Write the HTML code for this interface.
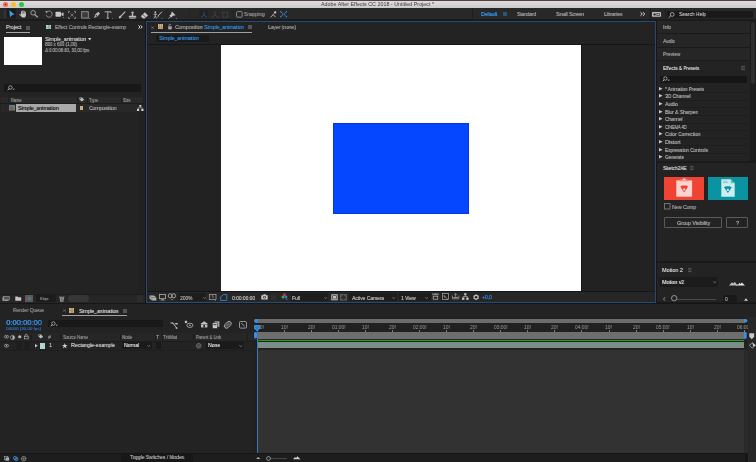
<!DOCTYPE html>
<html><head><meta charset="utf-8">
<style>
*{margin:0;padding:0;box-sizing:border-box}
html,body{width:756px;height:462px;overflow:hidden;background:#161616;font-family:"Liberation Sans",sans-serif;position:relative}
.a{position:absolute}
.t{position:absolute;white-space:nowrap;will-change:transform;transform-origin:0 0}
svg{position:absolute;overflow:visible}
</style></head><body>
<div class="a" style="left:0px;top:0px;width:756px;height:1px;background:#54403f;"></div>
<div class="a" style="left:0px;top:1px;width:756px;height:7px;background:linear-gradient(#dedede,#cbcbcb);"></div>
<div class="a" style="left:3.2px;top:1.9px;width:5.2px;height:5.2px;background:#fc5f57;border-radius:50%"></div>
<div class="a" style="left:11.2px;top:1.9px;width:5.2px;height:5.2px;background:#fdbb2e;border-radius:50%"></div>
<div class="a" style="left:19.2px;top:1.9px;width:5.2px;height:5.2px;background:#29c840;border-radius:50%"></div>
<div class="a" style="left:5.2px;top:3.9px;width:1.2px;height:1.2px;background:#5a1a18;border-radius:50%"></div>
<div class="t" style="left:321px;top:2.00px;font-size:5.3px;line-height:5.3px;color:#383838;font-weight:400;transform:scaleX(1.011);text-shadow:0.2px 0 0 #383838;text-shadow:none">Adobe After Effects CC 2018 - Untitled Project *</div>
<div class="a" style="left:0px;top:8px;width:756px;height:11px;background:#282828;"></div>
<div class="a" style="left:0px;top:19px;width:756px;height:2px;background:#1b1b1b;"></div>
<div class="a" style="left:3.5px;top:10px;width:0.7px;height:8px;background:#333;"></div>
<div class="a" style="left:5px;top:10px;width:0.7px;height:8px;background:#333;"></div>
<div class="a" style="left:7px;top:9.3px;width:8.8px;height:8.5px;background:#1b1b1b;"></div>
<svg style="left:8.6px;top:9.8px" width="6" height="7.4" viewBox="0 0 6 7.4"><path d="M0.3 0.2 L5.6 4.6 L3.2 4.9 L1 7.2 Z" fill="#3d9bf0"/></svg>
<svg style="left:18.5px;top:9.8px" width="7.5" height="7.6" viewBox="0 0 7.5 7.6"><g stroke="#c8c8c8" stroke-linecap="round" fill="none"><path d="M2.6 4.2 V1.6" stroke-width="1"/><path d="M3.9 3.8 V0.8" stroke-width="1"/><path d="M5.2 3.9 V1.2" stroke-width="1"/><path d="M6.4 4.4 V2.2" stroke-width="0.9"/><path d="M0.7 4.3 L2.2 5.8" stroke-width="1"/></g><path d="M2.1 3.8 H6.9 V5.2 C6.9 6.6 5.8 7.5 4.5 7.5 H3.8 C2.8 7.5 2.1 6.6 1.6 5.6 Z" fill="#c8c8c8"/></svg>
<svg style="left:29.5px;top:9.8px" width="8" height="8" viewBox="0 0 8 8"><circle cx="3.1" cy="2.8" r="2.3" stroke="#b4b4b4" stroke-width="0.8" fill="none"/><path d="M4.8 4.6 L7.4 7" stroke="#b4b4b4" stroke-width="1.1" stroke-linecap="round"/></svg>
<div class="a" style="left:40.5px;top:10px;width:0.6px;height:8px;background:#222;"></div>
<svg style="left:44.5px;top:9.8px" width="8" height="8" viewBox="0 0 8 8"><path d="M1.6 2.2 A3.1 3.1 0 1 1 1.2 5.2" stroke="#a0a0a0" stroke-width="0.8" fill="none"/><path d="M0.4 0.8 L3 1.4 L1.2 3.4 Z" fill="#a0a0a0"/></svg>
<svg style="left:55px;top:11px" width="10" height="7" viewBox="0 0 10 7"><rect x="0.5" y="0.8" width="5.5" height="5" rx="0.8" fill="#c8c8c8"/><path d="M6.3 2.6 L8.5 1.3 V5.3 L6.3 4 Z" fill="#c8c8c8"/><rect x="8.2" y="6" width="0.8" height="0.8" fill="#999"/></svg>
<svg style="left:68px;top:10.5px" width="8" height="8" viewBox="0 0 8 8"><g stroke="#aaa" stroke-width="0.7" fill="none"><path d="M0.5 2V0.5H2 M6 0.5H7.5V2 M7.5 6V7.5H6 M2 7.5H0.5V6"/></g><path d="M2.5 2.5 L3.8 3.8 M5.5 2.5 L4.2 3.8 M2.5 5.5 L3.8 4.2 M5.5 5.5 L4.2 4.2" stroke="#aaa" stroke-width="0.7"/></svg>
<div class="a" style="left:78px;top:10px;width:0.6px;height:8px;background:#222;"></div>
<svg style="left:81px;top:10.5px" width="9" height="8" viewBox="0 0 9 8"><rect x="0.7" y="0.7" width="6.6" height="6.4" stroke="#8e8e8e" stroke-width="1" fill="#3a3a3a"/><rect x="8" y="7" width="0.8" height="0.8" fill="#999"/></svg>
<svg style="left:93px;top:10.5px" width="8" height="8" viewBox="0 0 8 8"><path d="M1 7 L2.2 3.6 L5.2 0.8 L7 2.6 L4.2 5.6 Z" fill="#b8b8b8"/><circle cx="3.3" cy="4.7" r="0.7" fill="#282828"/></svg>
<svg style="left:104px;top:10.5px" width="9" height="8" viewBox="0 0 9 8"><path d="M0.6 0.8 H7 V2 M3.8 0.8 V7.2 M2.6 7.2 H5" stroke="#bbb" stroke-width="0.9" fill="none"/><rect x="8" y="7" width="0.8" height="0.8" fill="#999"/></svg>
<svg style="left:118px;top:10.5px" width="8" height="8" viewBox="0 0 8 8"><path d="M7.2 0.6 L3.2 4.8" stroke="#c0c0c0" stroke-width="1.1"/><path d="M0.8 7.4 C0.8 5.8 1.6 4.8 2.6 4.6 L3.6 5.5 C3.4 6.8 2.3 7.4 0.8 7.4 Z" fill="#c0c0c0"/></svg>
<svg style="left:128px;top:10.5px" width="9" height="8" viewBox="0 0 9 8"><circle cx="4.5" cy="1.6" r="1.2" fill="#bbb"/><rect x="3.8" y="2.4" width="1.4" height="2.6" fill="#bbb"/><rect x="0.8" y="4.8" width="7.4" height="1.8" rx="0.6" fill="#bbb"/><rect x="1.5" y="6.8" width="6" height="0.8" fill="#bbb"/></svg>
<svg style="left:140px;top:10.5px" width="9" height="8" viewBox="0 0 9 8"><path d="M0.8 5.3 L4.8 1.2 L8 4.4 L4.6 7.6 H3 Z" fill="#c4c4c4"/><path d="M2.6 3.4 L5.8 6.4" stroke="#282828" stroke-width="0.7"/></svg>
<div class="a" style="left:150.5px;top:10px;width:0.6px;height:8px;background:#222;"></div>
<svg style="left:153px;top:10.5px" width="10" height="8" viewBox="0 0 10 8"><circle cx="2.3" cy="1.2" r="0.9" fill="#bbb"/><path d="M2.3 2.4 V5 L1 7.5 M2.3 5 L3.5 7.5 M0.6 3.3 H4" stroke="#bbb" stroke-width="0.8" fill="none"/><path d="M9 0.6 L4.8 5.2" stroke="#bbb" stroke-width="1"/><path d="M4 6.8 L5.2 5 L5.8 5.7 Z" fill="#bbb"/><rect x="8.6" y="7" width="0.8" height="0.8" fill="#999"/></svg>
<div class="a" style="left:165.5px;top:10px;width:0.6px;height:8px;background:#222;"></div>
<svg style="left:168px;top:10.5px" width="9" height="8" viewBox="0 0 9 8"><path d="M4 0.6 L7.6 4.2 L6.7 4.6 L5 4.8 L3.2 6.6 L1.4 4.8 L3.2 3 L3.4 1.4 Z" fill="#c4c4c4"/><path d="M0.6 7.6 L2.6 5.6" stroke="#c4c4c4" stroke-width="0.8"/><rect x="8.2" y="7" width="0.8" height="0.8" fill="#999"/></svg>
<div class="a" style="left:189px;top:10px;width:0.6px;height:8px;background:#222;"></div>
<div class="a" style="left:198.5px;top:9.5px;width:9.5px;height:8.5px;background:#222;"></div>
<svg style="left:199.5px;top:10.5px" width="8" height="7" viewBox="0 0 8 7"><path d="M4 0.8 V4 L1 6.5 M4 4 L7 6.5" stroke="#2b5580" stroke-width="0.9" fill="none"/></svg>
<svg style="left:210.5px;top:10.5px" width="8" height="7" viewBox="0 0 8 7"><path d="M4 0.8 V4 L1 6.5 M4 4 L7 6.5" stroke="#4a4a4a" stroke-width="0.7" fill="none"/><circle cx="4" cy="0.8" r="0.6" fill="#4a4a4a"/><circle cx="1" cy="6.5" r="0.6" fill="#4a4a4a"/><circle cx="7" cy="6.5" r="0.6" fill="#4a4a4a"/></svg>
<svg style="left:221px;top:10.5px" width="8" height="7.5" viewBox="0 0 8 7.5"><path d="M1.5 1.5 L6.5 1 L6.8 6 L2 6.5 Z" stroke="#474747" stroke-width="0.7" fill="none"/><circle cx="1.5" cy="1.5" r="0.6" fill="#474747"/><circle cx="6.8" cy="6" r="0.6" fill="#474747"/></svg>
<div class="a" style="left:233px;top:10px;width:0.6px;height:8px;background:#222;"></div>
<svg style="left:236px;top:11px" width="7" height="7" viewBox="0 0 7 7"><rect x="0.6" y="0.6" width="5.6" height="5.6" rx="1" stroke="#8a8a8a" stroke-width="1" fill="#262626"/></svg>
<div class="t" style="left:244px;top:12.00px;font-size:5.6px;line-height:5.6px;color:#8e8e8e;font-weight:400;transform:scaleX(0.863);text-shadow:0.2px 0 0 #8e8e8e;">Snapping</div>
<svg style="left:269.5px;top:10.5px" width="7" height="7" viewBox="0 0 7 7"><path d="M0.5 6.4 L3.2 3.6 L5.4 6" stroke="#c4c4c4" stroke-width="0.85" fill="none"/><path d="M3.2 3.6 L4.8 1.6" stroke="#c4c4c4" stroke-width="0.7"/><circle cx="5.2" cy="1.3" r="1.15" fill="#d0d0d0"/></svg>
<svg style="left:280.4px;top:10.8px" width="7.2" height="6.4" viewBox="0 0 7.2 6.4"><g stroke="#3a8fe0" stroke-width="0.8" fill="none"><path d="M0.7 0.7 L2.9 2.6 V3.8 L0.7 5.7 M6.5 0.7 L4.3 2.6 V3.8 L6.5 5.7"/></g><circle cx="0.7" cy="0.7" r="0.65" fill="#3a8fe0"/><circle cx="0.7" cy="5.7" r="0.65" fill="#3a8fe0"/><circle cx="6.5" cy="0.7" r="0.65" fill="#3a8fe0"/><circle cx="6.5" cy="5.7" r="0.65" fill="#3a8fe0"/></svg>
<div class="a" style="left:472px;top:9px;width:0.8px;height:10px;background:#1d1d1d;"></div>
<div class="t" style="left:481.2px;top:12.00px;font-size:5.4px;line-height:5.4px;color:#3594ec;font-weight:400;transform:scaleX(0.936);text-shadow:0.2px 0 0 #3594ec;text-shadow:0.35px 0 0 #3594ec">Default</div>
<svg style="left:502.5px;top:12.2px" width="4" height="4" viewBox="0 0 4 4"><path d="M0 0.5 H4 M0 1.5 H4 M0 2.5 H4 M0 3.5 H4" stroke="#2e6fb0" stroke-width="0.6"/></svg>
<div class="t" style="left:517px;top:12.00px;font-size:5.4px;line-height:5.4px;color:#a0a0a0;font-weight:400;transform:scaleX(0.868);text-shadow:0.2px 0 0 #a0a0a0;">Standard</div>
<div class="t" style="left:556px;top:12.00px;font-size:5.4px;line-height:5.4px;color:#a0a0a0;font-weight:400;transform:scaleX(0.873);text-shadow:0.2px 0 0 #a0a0a0;">Small Screen</div>
<div class="t" style="left:604px;top:12.00px;font-size:5.4px;line-height:5.4px;color:#a0a0a0;font-weight:400;transform:scaleX(0.880);text-shadow:0.2px 0 0 #a0a0a0;">Libraries</div>
<svg style="left:640px;top:12px" width="6" height="4" viewBox="0 0 6 4"><path d="M0.5 0.3 L2.3 2 L0.5 3.7 M3 0.3 L4.8 2 L3 3.7" stroke="#e0e0e0" stroke-width="0.95" fill="none"/></svg>
<div class="a" style="left:649.5px;top:9px;width:0.6px;height:10px;background:#1d1d1d;"></div>
<svg style="left:652px;top:11.8px" width="9" height="5" viewBox="0 0 9 5"><rect x="0" y="0" width="9" height="4.8" rx="0.7" fill="#bdbdbd"/><circle cx="2.6" cy="2.4" r="1.2" fill="#282828"/><rect x="4.6" y="1" width="3" height="2.8" fill="#282828"/><rect x="5.2" y="1.6" width="1.8" height="1.6" fill="#bdbdbd"/></svg>
<div class="a" style="left:664.5px;top:9px;width:0.6px;height:10px;background:#1d1d1d;"></div>
<div class="a" style="left:667px;top:10.7px;width:86px;height:7px;background:#191919;border-radius:1px"></div>
<svg style="left:668px;top:11.5px" width="7" height="6" viewBox="0 0 7 6"><circle cx="4.2" cy="2.4" r="1.9" stroke="#c0c0c0" stroke-width="0.8" fill="none"/><path d="M2.8 3.8 L0.7 5.8" stroke="#c0c0c0" stroke-width="0.9"/></svg>
<div class="t" style="left:679px;top:12.00px;font-size:5.4px;line-height:5.4px;color:#b0b0b0;font-weight:400;transform:scaleX(0.910);text-shadow:0.2px 0 0 #b0b0b0;">Search Help</div>
<div class="a" style="left:0px;top:21px;width:145px;height:281px;background:#232323;"></div>
<div class="t" style="left:6px;top:25.00px;font-size:5.6px;line-height:5.6px;color:#c4c4c4;font-weight:400;transform:scaleX(0.884);text-shadow:0.2px 0 0 #c4c4c4;">Project</div>
<div class="a" style="left:26px;top:25.5px;width:3.5px;height:4px;background:#555;"></div>
<div class="a" style="left:6px;top:31.6px;width:24px;height:1.2px;background:#a8a8a8;"></div>
<div class="a" style="left:46px;top:24.5px;width:5px;height:4.5px;background:#a6d8d0;"></div>
<div class="a" style="left:47.6px;top:24.5px;width:0.4px;height:4.5px;background:#8ab0aa;"></div>
<div class="a" style="left:49.3px;top:24.5px;width:0.4px;height:4.5px;background:#8ab0aa;"></div>
<div class="a" style="left:46px;top:26.6px;width:5px;height:0.4px;background:#8ab0aa;"></div>
<div class="t" style="left:55.3px;top:25.00px;font-size:5.6px;line-height:5.6px;color:#959595;font-weight:400;transform:scaleX(0.868);text-shadow:0.2px 0 0 #959595;">Effect Controls Rectangle-examp</div>
<svg style="left:138px;top:25px" width="5" height="4" viewBox="0 0 5 4"><path d="M0.4 0.3 L2 2 L0.4 3.7 M2.6 0.3 L4.2 2 L2.6 3.7" stroke="#e0e0e0" stroke-width="0.95" fill="none"/></svg>
<div class="a" style="left:4px;top:37px;width:38px;height:28px;background:#ffffff;"></div>
<div class="t" style="left:44.8px;top:37.00px;font-size:5.7px;line-height:5.7px;color:#c4c4c4;font-weight:400;transform:scaleX(0.911);text-shadow:0.2px 0 0 #c4c4c4;">Simple_animation</div>
<svg style="left:87.5px;top:38px" width="3.4" height="2.8" viewBox="0 0 3.4 2.8"><path d="M0 0 H3.4 L1.7 2.6 Z" fill="#d0d0d0"/></svg>
<div class="t" style="left:44.8px;top:43.00px;font-size:4.8px;line-height:4.8px;color:#a0a0a0;font-weight:400;transform:scaleX(0.916);text-shadow:0.2px 0 0 #a0a0a0;">800 x 600 (1,00)</div>
<div class="t" style="left:44.8px;top:49.00px;font-size:4.8px;line-height:4.8px;color:#a0a0a0;font-weight:400;transform:scaleX(0.891);text-shadow:0.2px 0 0 #a0a0a0;">&Delta; 0:00:06:00, 30,00 fps</div>
<div class="a" style="left:4px;top:84px;width:137px;height:8px;background:#181818;"></div>
<svg style="left:6.5px;top:84.6px" width="8" height="6" viewBox="0 0 8 6"><circle cx="3.4" cy="2.5" r="1.75" stroke="#c4c4c4" stroke-width="0.7" fill="none"/><path d="M2.2 3.7 L0.6 5.3" stroke="#c4c4c4" stroke-width="0.9"/><path d="M5.7 3.7 H7.8 L6.75 5 Z" fill="#c4c4c4"/></svg>
<div class="a" style="left:1px;top:96.5px;width:142px;height:6.8px;background:#292929;"></div>
<div class="a" style="left:8.3px;top:97px;width:0.6px;height:6px;background:#1e1e1e;"></div>
<div class="a" style="left:77.3px;top:97px;width:0.6px;height:6px;background:#1e1e1e;"></div>
<div class="a" style="left:87.1px;top:97px;width:0.6px;height:6px;background:#1e1e1e;"></div>
<div class="a" style="left:120.8px;top:97px;width:0.6px;height:6px;background:#1e1e1e;"></div>
<div class="a" style="left:143px;top:97px;width:0.6px;height:6px;background:#1e1e1e;"></div>
<div class="t" style="left:11px;top:99.00px;font-size:4.9px;line-height:4.9px;color:#8c8c8c;font-weight:400;transform:scaleX(0.805);text-shadow:0.2px 0 0 #8c8c8c;">Name</div>
<svg style="left:79px;top:97px" width="5.5" height="4.8" viewBox="0 0 5.5 4.8"><path d="M0.5 0.5 H3 L5.2 2.7 L2.7 4.6 L0.5 2.6 Z" fill="#bdbdbd"/><circle cx="1.6" cy="1.5" r="0.5" fill="#292929"/></svg>
<div class="t" style="left:88.9px;top:99.00px;font-size:4.9px;line-height:4.9px;color:#8c8c8c;font-weight:400;transform:scaleX(0.848);text-shadow:0.2px 0 0 #8c8c8c;">Type</div>
<div class="t" style="left:123.4px;top:99.00px;font-size:4.9px;line-height:4.9px;color:#8c8c8c;font-weight:400;transform:scaleX(0.799);text-shadow:0.2px 0 0 #8c8c8c;">Size</div>
<div class="a" style="left:0px;top:103.3px;width:145px;height:0.8px;background:#1c1c1c;"></div>
<div class="a" style="left:1px;top:104px;width:136px;height:8px;background:#282828;"></div>
<div class="a" style="left:137px;top:112px;width:8px;height:182px;background:#212121;"></div>
<svg style="left:9px;top:105.3px" width="6" height="5.5" viewBox="0 0 6 5.5"><rect x="0" y="0" width="6" height="5.5" fill="#7a7a7a"/><rect x="0.8" y="0.8" width="2.6" height="2.4" fill="#3a6fd0"/><rect x="2.6" y="2.2" width="2.6" height="2.6" fill="#2c9a3a"/><rect x="1.4" y="2.8" width="2" height="2" fill="#d03030"/></svg>
<div class="a" style="left:16px;top:104px;width:60px;height:8px;background:#a9a9a9;"></div>
<div class="t" style="left:17.5px;top:106.00px;font-size:5.5px;line-height:5.5px;color:#1e1e1e;font-weight:400;transform:scaleX(0.926);text-shadow:0.2px 0 0 #1e1e1e;">Simple_animation</div>
<div class="a" style="left:79.5px;top:105.5px;width:3.8px;height:4.5px;background:#c9ad7c;"></div>
<div class="t" style="left:89px;top:106.00px;font-size:5.6px;line-height:5.6px;color:#a4a4a4;font-weight:400;transform:scaleX(0.888);text-shadow:0.2px 0 0 #a4a4a4;">Composition</div>
<svg style="left:137px;top:105px" width="6.5" height="6" viewBox="0 0 6.5 6"><rect x="2.3" y="0" width="2" height="1.8" fill="#d0d0d0"/><rect x="0" y="3.8" width="2.2" height="2.2" fill="#d0d0d0"/><rect x="4.3" y="3.8" width="2.2" height="2.2" fill="#d0d0d0"/><path d="M3.3 1.8 V2.8 M1.1 3.8 V2.8 H5.4 V3.8" stroke="#d0d0d0" stroke-width="0.5" fill="none"/></svg>
<div class="a" style="left:0px;top:294px;width:145px;height:8.5px;background:#262626;"></div>
<div class="a" style="left:0px;top:293.5px;width:145px;height:0.6px;background:#1c1c1c;"></div>
<svg style="left:2px;top:296px" width="8" height="5" viewBox="0 0 8 5"><rect x="0.5" y="1.2" width="6" height="3.6" fill="#aaa"/><rect x="1.5" y="0.3" width="6" height="3.6" stroke="#aaa" stroke-width="0.5" fill="#555"/></svg>
<svg style="left:15px;top:296px" width="6.5" height="5" viewBox="0 0 6.5 5"><path d="M0.3 0.5 H2.5 L3 1.2 H6.2 V4.7 H0.3 Z" fill="#c8c8c8"/></svg>
<div class="a" style="left:25px;top:295px;width:8px;height:7px;background:#5a5a5a;"></div>
<svg style="left:26px;top:296px" width="6" height="5" viewBox="0 0 6 5"><circle cx="2.3" cy="2" r="1.5" fill="#d03030"/><circle cx="3.8" cy="2.2" r="1.5" fill="#2c9a3a" opacity="0.85"/><circle cx="3" cy="3.3" r="1.4" fill="#3a6fd0" opacity="0.85"/></svg>
<div class="a" style="left:35.5px;top:295px;width:20px;height:7px;background:#1c1c1c;"></div>
<div class="t" style="left:40px;top:297.00px;font-size:4px;line-height:4px;color:#8c8c8c;font-weight:400;transform:scaleX(0.878);text-shadow:0.2px 0 0 #8c8c8c;">8 bpc</div>
<svg style="left:58.5px;top:295.5px" width="5.5" height="6" viewBox="0 0 5.5 6"><path d="M0.6 1.5 H5 L4.4 5.8 H1.2 Z" fill="#9a9a9a"/><rect x="0" y="0.7" width="5.5" height="0.8" fill="#9a9a9a"/><path d="M2.2 2.4 V5 M3.3 2.4 V5" stroke="#262626" stroke-width="0.4"/></svg>
<div class="a" style="left:68px;top:295px;width:21px;height:6.5px;background:#363636;border-radius:3.5px"></div>
<div class="a" style="left:137px;top:294.5px;width:6px;height:7.5px;background:#2c2c2c;"></div>
<div class="a" style="left:146px;top:21px;width:510px;height:282px;background:#232323;border:1.5px solid #264a74"></div>
<svg style="left:151.4px;top:25.6px" width="3.2" height="3.2" viewBox="0 0 3.2 3.2"><path d="M0.3 0.3 L2.9 2.9 M2.9 0.3 L0.3 2.9" stroke="#8a8a8a" stroke-width="0.6"/></svg>
<div class="a" style="left:158px;top:24.4px;width:4.5px;height:4.8px;background:#c9ad7c;"></div>
<div class="a" style="left:159.4px;top:24.4px;width:0.4px;height:4.8px;background:#b09468;"></div>
<div class="a" style="left:160.9px;top:24.4px;width:0.4px;height:4.8px;background:#b09468;"></div>
<div class="a" style="left:158px;top:26.6px;width:4.5px;height:0.4px;background:#b09468;"></div>
<svg style="left:167.8px;top:23.8px" width="4" height="5.5" viewBox="0 0 4 5.5"><rect x="0.3" y="2.3" width="3.4" height="3" fill="#bbb"/><path d="M1 2.3 V1.2 A1 1 0 0 1 3 1.2" stroke="#bbb" stroke-width="0.6" fill="none"/><rect x="1.7" y="3.2" width="0.6" height="1.2" fill="#232323"/></svg>
<div class="t" style="left:175px;top:25.00px;font-size:5.5px;line-height:5.5px;color:#9a9a9a;font-weight:400;transform:scaleX(0.916);text-shadow:0.2px 0 0 #9a9a9a;">Composition</div>
<div class="t" style="left:204.3px;top:25.00px;font-size:5.5px;line-height:5.5px;color:#2f86da;font-weight:400;transform:scaleX(0.915);text-shadow:0.2px 0 0 #2f86da;">Simple_animation</div>
<div class="a" style="left:248px;top:25.3px;width:3.5px;height:4px;background:#555;"></div>
<div class="a" style="left:151px;top:31.6px;width:101px;height:1.2px;background:#a0a0a0;"></div>
<div class="t" style="left:268px;top:25.00px;font-size:5.5px;line-height:5.5px;color:#9a9a9a;font-weight:400;transform:scaleX(0.898);text-shadow:0.2px 0 0 #9a9a9a;">Layer (none)</div>
<div class="a" style="left:156px;top:35px;width:53px;height:7px;background:#1a1a1a;"></div>
<div class="t" style="left:159px;top:36.00px;font-size:5.5px;line-height:5.5px;color:#2f86da;font-weight:400;transform:scaleX(0.915);text-shadow:0.2px 0 0 #2f86da;">Simple_animation</div>
<div class="a" style="left:147px;top:44px;width:508px;height:1px;background:#161616;"></div>
<div class="a" style="left:147px;top:45px;width:508px;height:246px;background:#222222;"></div>
<div class="a" style="left:221px;top:45px;width:360px;height:246px;background:#ffffff;"></div>
<div class="a" style="left:581px;top:45px;width:1px;height:246px;background:#161616;"></div>
<div class="a" style="left:333px;top:122.6px;width:136px;height:91.3px;background:#0447fe;"></div>
<div class="a" style="left:333px;top:122.6px;width:136px;height:91.3px;border:0.5px solid #0036e6"></div>
<div class="a" style="left:147px;top:291px;width:508px;height:1px;background:#161616;"></div>
<div class="a" style="left:147px;top:292px;width:508px;height:9.5px;background:#262626;"></div>
<svg style="left:149px;top:293.5px" width="8" height="7" viewBox="0 0 8 7"><path d="M0.5 1.5 H5 L7.3 3.5 V6.5 H2.8 L0.5 4.5 Z" fill="#b0b0b0"/><path d="M0.5 1.5 L2.8 3.5 H7.3 M2.8 3.5 V6.5" stroke="#555" stroke-width="0.5" fill="none"/></svg>
<svg style="left:159px;top:293.5px" width="7" height="7" viewBox="0 0 7 7"><rect x="0.5" y="0.5" width="6" height="4.2" stroke="#b0b0b0" stroke-width="0.8" fill="none"/><rect x="2.6" y="5" width="2" height="0.8" fill="#b0b0b0"/><rect x="1.6" y="5.8" width="4" height="0.6" fill="#b0b0b0"/></svg>
<svg style="left:168px;top:293.2px" width="8" height="8" viewBox="0 0 8 8"><rect x="0.4" y="0.8" width="3.5" height="4" rx="1.5" stroke="#c0c0c0" stroke-width="0.8" fill="none"/><rect x="3.9" y="0.8" width="3.5" height="4" rx="1.5" stroke="#c0c0c0" stroke-width="0.8" fill="none"/><path d="M3 6 H5 L4 7 Z" fill="#c0c0c0"/></svg>
<div class="a" style="left:178.4px;top:293px;width:28px;height:7.5px;background:#1d1d1d;"></div>
<div class="t" style="left:180px;top:297.00px;font-size:4.6px;line-height:4.6px;color:#a0a0a0;font-weight:400;transform:scaleX(1.055);text-shadow:0.2px 0 0 #a0a0a0;">200%</div>
<svg style="left:203px;top:297px" width="3.4" height="2" viewBox="0 0 3.4 2"><path d="M0.3 0.3 L1.7 1.6 L3.1 0.3" stroke="#a0a0a0" stroke-width="0.6" fill="none"/></svg>
<svg style="left:209px;top:293.5px" width="8" height="7.5" viewBox="0 0 8 7.5"><rect x="0.5" y="0.5" width="6.5" height="5" stroke="#aaa" stroke-width="0.7" fill="none"/><path d="M2.5 1.8 H4 V4.2" stroke="#aaa" stroke-width="0.6" fill="none"/><path d="M5.8 6 L7 6 L6.4 7 Z" fill="#aaa"/></svg>
<svg style="left:219.5px;top:293.5px" width="7.5" height="7" viewBox="0 0 7.5 7"><path d="M0.6 6.4 V3 L3.5 0.6 H6.8 V6.4 Z" stroke="#3a8fe0" stroke-width="0.8" fill="none"/></svg>
<div class="t" style="left:231.8px;top:297.00px;font-size:4.6px;line-height:4.6px;color:#b4b4b4;font-weight:400;transform:scaleX(1.059);text-shadow:0.2px 0 0 #b4b4b4;">0:00:00:00</div>
<svg style="left:260.6px;top:293.8px" width="7" height="5.8" viewBox="0 0 7 5.8"><path d="M0.3 1.2 H2 L2.6 0.3 H4.4 L5 1.2 H6.7 V5.5 H0.3 Z" fill="#c8c8c8"/><circle cx="3.5" cy="3.3" r="1.3" fill="#262626"/><circle cx="3.5" cy="3.3" r="0.7" fill="#c8c8c8"/></svg>
<svg style="left:270px;top:293.5px" width="7" height="7" viewBox="0 0 7 7"><path d="M1 6 L6 1" stroke="#393939" stroke-width="0.8"/><circle cx="2.5" cy="2.8" r="1.8" stroke="#393939" stroke-width="0.7" fill="none"/><circle cx="4.5" cy="4.4" r="1.8" stroke="#393939" stroke-width="0.7" fill="none"/></svg>
<svg style="left:280.5px;top:293.3px" width="7" height="7" viewBox="0 0 7 7"><circle cx="3.5" cy="1.7" r="1.5" fill="#e03030"/><circle cx="2" cy="4" r="1.5" fill="#30b040"/><circle cx="5" cy="4" r="1.5" fill="#3a70e0"/><path d="M5 6.2 H6.6 L5.8 7 Z" fill="#aaa"/></svg>
<div class="a" style="left:290.5px;top:293px;width:37px;height:7.5px;background:#1d1d1d;"></div>
<div class="t" style="left:292px;top:297.00px;font-size:4.9px;line-height:4.9px;color:#b4b4b4;font-weight:400;transform:scaleX(1.014);text-shadow:0.2px 0 0 #b4b4b4;">Full</div>
<svg style="left:323.5px;top:297px" width="3.4" height="2" viewBox="0 0 3.4 2"><path d="M0.3 0.3 L1.7 1.6 L3.1 0.3" stroke="#a0a0a0" stroke-width="0.6" fill="none"/></svg>
<svg style="left:330.8px;top:293.6px" width="7" height="6.6" viewBox="0 0 7 6.6"><rect x="0.3" y="0.3" width="6.4" height="6" fill="#c0c0c0"/><rect x="1.3" y="1.3" width="4.4" height="4" fill="#3a3a3a"/><rect x="2" y="2" width="3" height="2.6" fill="#c0c0c0"/></svg>
<svg style="left:340.3px;top:293.6px" width="7" height="6.6" viewBox="0 0 7 6.6"><rect x="0.5" y="0.5" width="6" height="5.6" stroke="#777" stroke-width="0.6" fill="#2c2c2c"/><path d="M1.5 1.5 H3 M4 1.5 H5.5 V3 M5.5 4 V5.2 H4 M3 5.2 H1.5 V4 M1.5 3 V1.5" stroke="#777" stroke-width="0.5" fill="none"/></svg>
<div class="a" style="left:349px;top:293px;width:47.5px;height:7.5px;background:#1d1d1d;"></div>
<div class="t" style="left:352px;top:297.00px;font-size:4.9px;line-height:4.9px;color:#b4b4b4;font-weight:400;transform:scaleX(0.998);text-shadow:0.2px 0 0 #b4b4b4;">Active Camera</div>
<svg style="left:391.5px;top:297px" width="3.4" height="2" viewBox="0 0 3.4 2"><path d="M0.3 0.3 L1.7 1.6 L3.1 0.3" stroke="#a0a0a0" stroke-width="0.6" fill="none"/></svg>
<div class="a" style="left:399px;top:293px;width:31.5px;height:7.5px;background:#1d1d1d;"></div>
<div class="t" style="left:401.4px;top:297.00px;font-size:4.9px;line-height:4.9px;color:#b4b4b4;font-weight:400;transform:scaleX(1.000);text-shadow:0.2px 0 0 #b4b4b4;">1 View</div>
<svg style="left:424.8px;top:297px" width="3.4" height="2" viewBox="0 0 3.4 2"><path d="M0.3 0.3 L1.7 1.6 L3.1 0.3" stroke="#a0a0a0" stroke-width="0.6" fill="none"/></svg>
<svg style="left:432.2px;top:293.3px" width="7" height="7" viewBox="0 0 7 7"><path d="M0.3 0.5 H1.3 M2.3 0.5 H4.7 M5.7 0.5 H6.7" stroke="#bbb" stroke-width="0.6"/><rect x="0.3" y="1.4" width="6.4" height="0.7" fill="#bbb"/><rect x="1.2" y="3.2" width="4.6" height="3" stroke="#bbb" stroke-width="0.7" fill="none"/></svg>
<div class="a" style="left:441px;top:292.5px;width:9px;height:8.5px;background:#1c1c1c;"></div>
<svg style="left:441.9px;top:293.4px" width="7" height="7" viewBox="0 0 7 7"><rect x="0.4" y="0.4" width="6.2" height="6" stroke="#b0b0b0" stroke-width="0.7" fill="none"/><path d="M2.2 2 V4 H4" stroke="#b0b0b0" stroke-width="0.8" fill="none"/><path d="M4.2 4.2 L5.6 6.8" stroke="#b0b0b0" stroke-width="0.6"/></svg>
<svg style="left:451.9px;top:293.3px" width="7.2" height="7" viewBox="0 0 7.2 7"><path d="M0.4 2.6 V5.8 H6.8 V2.6" stroke="#aaa" stroke-width="0.7" fill="none"/><path d="M3.6 3.8 V0.5 M2.3 1.8 L3.6 0.5 L4.9 1.8" stroke="#aaa" stroke-width="0.7" fill="none"/><rect x="1.3" y="4.2" width="4.6" height="0.8" fill="#aaa"/></svg>
<svg style="left:461.8px;top:293.3px" width="6.6" height="7" viewBox="0 0 6.6 7"><rect x="2.2" y="0.2" width="2.2" height="2" fill="#c8c8c8"/><rect x="0" y="4.6" width="2.4" height="2.2" fill="#c8c8c8"/><rect x="4.2" y="4.6" width="2.4" height="2.2" fill="#c8c8c8"/><path d="M3.3 2.2 V3.5 M1.2 4.6 V3.5 H5.4 V4.6" stroke="#c8c8c8" stroke-width="0.6" fill="none"/></svg>
<svg style="left:472.9px;top:293.5px" width="6.2" height="6.4" viewBox="0 0 6.2 6.4"><path d="M3.1 0.3 L5.7 1.7 V4.7 L3.1 6.1 L0.5 4.7 V1.7 Z" fill="#c0c0c0"/><circle cx="3.1" cy="3.2" r="1.3" fill="#262626"/></svg>
<div class="t" style="left:482.2px;top:296.00px;font-size:4.6px;line-height:4.6px;color:#2f86da;font-weight:400;transform:scaleX(1.080);text-shadow:0.2px 0 0 #2f86da;">+0,0</div>
<div class="a" style="left:657px;top:21px;width:99px;height:282px;background:#1a1a1a;"></div>
<div class="a" style="left:657px;top:21px;width:92.5px;height:11.7px;background:#262626;"></div>
<div class="t" style="left:662.7px;top:25.00px;font-size:5.4px;line-height:5.4px;color:#9c9c9c;font-weight:400;transform:scaleX(0.900);text-shadow:0.2px 0 0 #9c9c9c;">Info</div>
<div class="a" style="left:657px;top:34px;width:92.5px;height:12.7px;background:#262626;"></div>
<div class="t" style="left:662.7px;top:39.00px;font-size:5.4px;line-height:5.4px;color:#9c9c9c;font-weight:400;transform:scaleX(0.892);text-shadow:0.2px 0 0 #9c9c9c;">Audio</div>
<div class="a" style="left:657px;top:47.5px;width:92.5px;height:12.5px;background:#262626;"></div>
<div class="t" style="left:662.7px;top:52.00px;font-size:5.4px;line-height:5.4px;color:#9c9c9c;font-weight:400;transform:scaleX(0.902);text-shadow:0.2px 0 0 #9c9c9c;">Preview</div>
<div class="a" style="left:657px;top:61px;width:92.5px;height:100px;background:#232323;"></div>
<div class="t" style="left:662.7px;top:66.00px;font-size:5.5px;line-height:5.5px;color:#c8c8c8;font-weight:400;transform:scaleX(0.862);text-shadow:0.2px 0 0 #c8c8c8;">Effects &amp; Presets</div>
<svg style="left:741px;top:66px" width="4" height="4" viewBox="0 0 4 4"><path d="M0 0.4 H4 M0 2 H4 M0 3.6 H4" stroke="#6a6a6a" stroke-width="0.7"/></svg>
<div class="a" style="left:660px;top:75.5px;width:87px;height:7.2px;background:#161616;"></div>
<svg style="left:661.5px;top:76px" width="8" height="6" viewBox="0 0 8 6"><circle cx="3.4" cy="2.5" r="1.75" stroke="#c4c4c4" stroke-width="0.7" fill="none"/><path d="M2.2 3.7 L0.6 5.3" stroke="#c4c4c4" stroke-width="0.9"/><path d="M5.7 3.7 H7.8 L6.75 5 Z" fill="#c4c4c4"/></svg>
<div class="a" style="left:658px;top:92.1px;width:90px;height:0.5px;background:#1d1d1d;"></div>
<svg style="left:659.4px;top:87.1px" width="3.6" height="3.4" viewBox="0 0 3.6 3.4"><path d="M0 0 L3.6 1.7 L0 3.4 Z" fill="#c8c8c8"/></svg>
<div class="t" style="left:664.6px;top:87.00px;font-size:5.4px;line-height:5.4px;color:#a4a4a4;font-weight:400;transform:scaleX(0.829);text-shadow:0.2px 0 0 #a4a4a4;">* Animation Presets</div>
<div class="a" style="left:658px;top:99.72px;width:90px;height:0.5px;background:#1d1d1d;"></div>
<svg style="left:659.4px;top:94.1px" width="3.6" height="3.4" viewBox="0 0 3.6 3.4"><path d="M0 0 L3.6 1.7 L0 3.4 Z" fill="#c8c8c8"/></svg>
<div class="t" style="left:664.6px;top:94.00px;font-size:5.4px;line-height:5.4px;color:#a4a4a4;font-weight:400;transform:scaleX(0.895);text-shadow:0.2px 0 0 #a4a4a4;">3D Channel</div>
<div class="a" style="left:658px;top:107.33999999999999px;width:90px;height:0.5px;background:#1d1d1d;"></div>
<svg style="left:659.4px;top:102.1px" width="3.6" height="3.4" viewBox="0 0 3.6 3.4"><path d="M0 0 L3.6 1.7 L0 3.4 Z" fill="#c8c8c8"/></svg>
<div class="t" style="left:664.6px;top:102.00px;font-size:5.4px;line-height:5.4px;color:#a4a4a4;font-weight:400;transform:scaleX(0.906);text-shadow:0.2px 0 0 #a4a4a4;">Audio</div>
<div class="a" style="left:658px;top:114.96px;width:90px;height:0.5px;background:#1d1d1d;"></div>
<svg style="left:659.4px;top:110.1px" width="3.6" height="3.4" viewBox="0 0 3.6 3.4"><path d="M0 0 L3.6 1.7 L0 3.4 Z" fill="#c8c8c8"/></svg>
<div class="t" style="left:664.6px;top:110.00px;font-size:5.4px;line-height:5.4px;color:#a4a4a4;font-weight:400;transform:scaleX(0.903);text-shadow:0.2px 0 0 #a4a4a4;">Blur &amp; Sharpen</div>
<div class="a" style="left:658px;top:122.58px;width:90px;height:0.5px;background:#1d1d1d;"></div>
<svg style="left:659.4px;top:117.1px" width="3.6" height="3.4" viewBox="0 0 3.6 3.4"><path d="M0 0 L3.6 1.7 L0 3.4 Z" fill="#c8c8c8"/></svg>
<div class="t" style="left:664.6px;top:117.00px;font-size:5.4px;line-height:5.4px;color:#a4a4a4;font-weight:400;transform:scaleX(0.871);text-shadow:0.2px 0 0 #a4a4a4;">Channel</div>
<div class="a" style="left:658px;top:130.20000000000002px;width:90px;height:0.5px;background:#1d1d1d;"></div>
<svg style="left:659.4px;top:125.1px" width="3.6" height="3.4" viewBox="0 0 3.6 3.4"><path d="M0 0 L3.6 1.7 L0 3.4 Z" fill="#c8c8c8"/></svg>
<div class="t" style="left:664.6px;top:125.00px;font-size:5.4px;line-height:5.4px;color:#a4a4a4;font-weight:400;transform:scaleX(0.740);text-shadow:0.2px 0 0 #a4a4a4;">CINEMA 4D</div>
<div class="a" style="left:658px;top:137.82px;width:90px;height:0.5px;background:#1d1d1d;"></div>
<svg style="left:659.4px;top:132.1px" width="3.6" height="3.4" viewBox="0 0 3.6 3.4"><path d="M0 0 L3.6 1.7 L0 3.4 Z" fill="#c8c8c8"/></svg>
<div class="t" style="left:664.6px;top:132.00px;font-size:5.4px;line-height:5.4px;color:#a4a4a4;font-weight:400;transform:scaleX(0.904);text-shadow:0.2px 0 0 #a4a4a4;">Color Correction</div>
<div class="a" style="left:658px;top:145.44px;width:90px;height:0.5px;background:#1d1d1d;"></div>
<svg style="left:659.4px;top:140.1px" width="3.6" height="3.4" viewBox="0 0 3.6 3.4"><path d="M0 0 L3.6 1.7 L0 3.4 Z" fill="#c8c8c8"/></svg>
<div class="t" style="left:664.6px;top:140.00px;font-size:5.4px;line-height:5.4px;color:#a4a4a4;font-weight:400;transform:scaleX(0.995);text-shadow:0.2px 0 0 #a4a4a4;">Distort</div>
<div class="a" style="left:658px;top:153.06px;width:90px;height:0.5px;background:#1d1d1d;"></div>
<svg style="left:659.4px;top:148.1px" width="3.6" height="3.4" viewBox="0 0 3.6 3.4"><path d="M0 0 L3.6 1.7 L0 3.4 Z" fill="#c8c8c8"/></svg>
<div class="t" style="left:664.6px;top:148.00px;font-size:5.4px;line-height:5.4px;color:#a4a4a4;font-weight:400;transform:scaleX(0.891);text-shadow:0.2px 0 0 #a4a4a4;">Expression Controls</div>
<div class="a" style="left:658px;top:160.68px;width:90px;height:0.5px;background:#1d1d1d;"></div>
<svg style="left:659.4px;top:155.1px" width="3.6" height="3.4" viewBox="0 0 3.6 3.4"><path d="M0 0 L3.6 1.7 L0 3.4 Z" fill="#c8c8c8"/></svg>
<div class="t" style="left:664.6px;top:155.00px;font-size:5.4px;line-height:5.4px;color:#a4a4a4;font-weight:400;transform:scaleX(0.845);text-shadow:0.2px 0 0 #a4a4a4;">Generate</div>
<div class="a" style="left:750px;top:21px;width:5px;height:140px;background:#1c1c1c;"></div>
<div class="a" style="left:750.5px;top:22px;width:4px;height:62px;background:#2e2e2e;border-radius:2px"></div>
<div class="a" style="left:657px;top:163px;width:99px;height:98px;background:#232323;"></div>
<div class="t" style="left:662.5px;top:166.00px;font-size:5.4px;line-height:5.4px;color:#c8c8c8;font-weight:400;transform:scaleX(0.881);text-shadow:0.2px 0 0 #c8c8c8;">Sketch2AE</div>
<svg style="left:690px;top:166px" width="3.5" height="4" viewBox="0 0 3.5 4"><path d="M0 0.4 H3.5 M0 2 H3.5 M0 3.6 H3.5" stroke="#6a6a6a" stroke-width="0.7"/></svg>
<div class="a" style="left:664px;top:177px;width:40px;height:22.7px;background:#ef4434;"></div>
<div class="a" style="left:708.2px;top:177px;width:40px;height:22.7px;background:#0a93a1;"></div>
<svg style="left:675.8px;top:177.8px" width="16.4" height="19" viewBox="0 0 16.4 19"><path d="M0.3 2.4 H16.1 V18.7 H0.3 Z" fill="#fbd4cf"/><path d="M4.5 2.8 V1.6 H6.6 A1.6 1.6 0 0 1 9.8 1.6 H11.9 V2.8 Z" fill="#fbd4cf" stroke="#ef4434" stroke-width="0.5"/><path d="M4.3 8.6 L6.2 7.6 H10.2 L12.1 8.6 L8.2 14.5 Z" fill="#ef4434"/><path d="M7.2 11 L8.2 10 L9.2 11 V12.6 H7.2 Z" fill="#fbd4cf"/></svg>
<svg style="left:720.8px;top:178.5px" width="14" height="18" viewBox="0 0 14 18"><path d="M0.3 0.3 H9.8 L13.7 4.2 V17.7 H0.3 Z" fill="#cdeef0"/><path d="M9.8 0.3 V4.2 H13.7 Z" fill="#62b9c2"/><rect x="1.8" y="1.6" width="4.5" height="0.9" fill="#7cc6cd"/><rect x="1.8" y="3.2" width="5.5" height="0.9" fill="#7cc6cd"/><path d="M3 8.2 L4.9 7.2 H8.9 L10.8 8.2 L6.9 14 Z" fill="#0a93a1"/><path d="M5.9 10.5 L6.9 9.5 L7.9 10.5 V12.1 H5.9 Z" fill="#cdeef0"/></svg>
<svg style="left:664px;top:203.3px" width="6.5" height="6.5" viewBox="0 0 6.5 6.5"><rect x="0.5" y="0.5" width="5.5" height="5.5" stroke="#7a7a7a" stroke-width="0.9" fill="#232323"/></svg>
<div class="t" style="left:672.3px;top:205.00px;font-size:5.3px;line-height:5.3px;color:#9a9a9a;font-weight:400;transform:scaleX(0.916);text-shadow:0.2px 0 0 #9a9a9a;">New Comp</div>
<div class="a" style="left:664px;top:217.3px;width:57.8px;height:11px;background:#232323;border:1px solid #5a5a5a;border-radius:1px"></div>
<div class="t" style="left:676.5px;top:221.00px;font-size:5.3px;line-height:5.3px;color:#a4a4a4;font-weight:400;transform:scaleX(0.937);text-shadow:0.2px 0 0 #a4a4a4;">Group Visibility</div>
<div class="a" style="left:726px;top:217.3px;width:22px;height:11px;background:#232323;border:1px solid #5a5a5a;border-radius:1px"></div>
<div class="t" style="left:735.8px;top:221.00px;font-size:5.3px;line-height:5.3px;color:#a4a4a4;font-weight:400;transform:scaleX(1.000);text-shadow:0.2px 0 0 #a4a4a4;">?</div>
<div class="a" style="left:657px;top:263px;width:99px;height:39px;background:#232323;"></div>
<div class="t" style="left:662px;top:268.00px;font-size:5.4px;line-height:5.4px;color:#c8c8c8;font-weight:400;transform:scaleX(0.991);text-shadow:0.2px 0 0 #c8c8c8;">Motion 2</div>
<svg style="left:688px;top:268px" width="3.5" height="4" viewBox="0 0 3.5 4"><path d="M0 0.4 H3.5 M0 2 H3.5 M0 3.6 H3.5" stroke="#6a6a6a" stroke-width="0.7"/></svg>
<div class="a" style="left:659px;top:277.3px;width:59px;height:9.3px;background:#1b1b1b;"></div>
<div class="t" style="left:662px;top:280.00px;font-size:5.4px;line-height:5.4px;color:#d8d8d8;font-weight:400;transform:scaleX(0.941);text-shadow:0.2px 0 0 #d8d8d8;">Motion v2</div>
<svg style="left:713px;top:281px" width="3.6" height="2.2" viewBox="0 0 3.6 2.2"><path d="M0.3 0.3 L1.8 1.8 L3.3 0.3" stroke="#a0a0a0" stroke-width="0.6" fill="none"/></svg>
<svg style="left:729px;top:281px" width="17" height="5" viewBox="0 0 17 5"><path d="M0 4.6 L3 1.2 L4.5 2.6 L5.8 0.8 L8.5 4.6 Z" fill="#bdbdbd"/><path d="M7 4.6 L10 1.8 L11.5 3 L12.8 1.5 L16 4.6 Z" fill="#e8e8e8"/><circle cx="9" cy="2.6" r="1" fill="#232323"/></svg>
<svg style="left:662.5px;top:296.5px" width="2.5" height="4" viewBox="0 0 2.5 4"><path d="M2 0.3 L0.5 2 L2 3.7" stroke="#c0c0c0" stroke-width="0.7" fill="none"/></svg>
<div class="a" style="left:677px;top:298.5px;width:39px;height:0.7px;background:#4a4a4a;"></div>
<svg style="left:670.6px;top:295.4px" width="6.4" height="6.4" viewBox="0 0 6.4 6.4"><circle cx="3.2" cy="3.2" r="2.7" stroke="#b0b0b0" stroke-width="0.8" fill="#232323"/></svg>
<div class="a" style="left:723px;top:295px;width:14px;height:6.5px;background:#191919;"></div>
<div class="t" style="left:724.5px;top:298.00px;font-size:4.6px;line-height:4.6px;color:#a0a0a0;font-weight:400;transform:scaleX(1.000);text-shadow:0.2px 0 0 #a0a0a0;">0</div>
<svg style="left:743.5px;top:297.5px" width="4" height="3" viewBox="0 0 4 3"><path d="M0 2.8 L2 0.3 L4 2.8 Z" fill="#d0d0d0"/></svg>
<div class="a" style="left:0px;top:304px;width:756px;height:149px;background:#232323;"></div>
<div class="t" style="left:13.1px;top:308.00px;font-size:5.5px;line-height:5.5px;color:#8a8a8a;font-weight:400;transform:scaleX(0.856);text-shadow:0.2px 0 0 #8a8a8a;">Render Queue</div>
<svg style="left:62.8px;top:309px" width="3" height="3" viewBox="0 0 3 3"><path d="M0.3 0.3 L2.7 2.7 M2.7 0.3 L0.3 2.7" stroke="#8a8a8a" stroke-width="0.6"/></svg>
<div class="a" style="left:69px;top:307.8px;width:4.6px;height:4.8px;background:#c9ad7c;"></div>
<div class="a" style="left:70.5px;top:307.8px;width:0.4px;height:4.8px;background:#b09468;"></div>
<div class="a" style="left:72px;top:307.8px;width:0.4px;height:4.8px;background:#b09468;"></div>
<div class="a" style="left:69px;top:310px;width:4.6px;height:0.4px;background:#b09468;"></div>
<div class="t" style="left:79px;top:309.00px;font-size:5.6px;line-height:5.6px;color:#c8c8c8;font-weight:400;transform:scaleX(0.884);text-shadow:0.2px 0 0 #c8c8c8;">Simple_animation</div>
<div class="a" style="left:123px;top:308.6px;width:3.5px;height:4px;background:#555;"></div>
<div class="a" style="left:62px;top:315px;width:65px;height:1.1px;background:#a0a0a0;"></div>
<div class="t" style="left:6px;top:319.00px;font-size:7.6px;line-height:7.6px;color:#3594ec;font-weight:400;transform:scaleX(0.994);text-shadow:0.2px 0 0 #3594ec;text-shadow:0.4px 0 0 #3594ec">0:00:00:00</div>
<div class="t" style="left:6px;top:327.00px;font-size:4.2px;line-height:4.2px;color:#2a6cb0;font-weight:400;transform:scaleX(1.066);text-shadow:0.2px 0 0 #2a6cb0;">00000 (30.00 fps)</div>
<div class="a" style="left:48px;top:320px;width:115px;height:7.4px;background:#181818;"></div>
<svg style="left:50px;top:320.8px" width="8" height="6" viewBox="0 0 8 6"><circle cx="3.4" cy="2.5" r="1.75" stroke="#c4c4c4" stroke-width="0.7" fill="none"/><path d="M2.2 3.7 L0.6 5.3" stroke="#c4c4c4" stroke-width="0.9"/><path d="M5.7 3.7 H7.8 L6.75 5 Z" fill="#c4c4c4"/></svg>
<svg style="left:170px;top:321.5px" width="9" height="7" viewBox="0 0 9 7"><path d="M0.4 0.8 L3.2 1.4 L6.4 5.8" stroke="#bdbdbd" stroke-width="0.9" fill="none"/><path d="M2 0.4 L4.6 2.2" stroke="#bdbdbd" stroke-width="0.7"/><circle cx="6.6" cy="6" r="0.9" fill="#bdbdbd"/><rect x="5.2" y="1" width="2.6" height="1.4" fill="#bdbdbd"/></svg>
<svg style="left:184px;top:320.3px" width="9.5" height="8" viewBox="0 0 9.5 8"><path d="M2 0.3 L3.6 1.9 L2 3.5 L0.4 1.9 Z" fill="#c8c8c8"/><ellipse cx="5.9" cy="5.3" rx="3" ry="2.1" stroke="#bdbdbd" stroke-width="0.8" fill="none"/><circle cx="5.9" cy="5.3" r="0.8" fill="#bdbdbd"/></svg>
<svg style="left:200px;top:321px" width="8.4" height="6.6" viewBox="0 0 8.4 6.6"><path d="M0.3 3 L4.2 0.3 L8.1 3 Z" fill="#c0c0c0"/><rect x="1" y="3.4" width="6.4" height="3" fill="#c0c0c0"/><rect x="3.4" y="4" width="1.6" height="2.4" fill="#232323"/></svg>
<svg style="left:212px;top:320.6px" width="7.6" height="7.6" viewBox="0 0 7.6 7.6"><rect x="2.4" y="0.3" width="5" height="5.6" fill="#a8a8a8"/><rect x="0.4" y="1.8" width="5" height="5.6" fill="#c8c8c8" stroke="#232323" stroke-width="0.5"/><rect x="1.4" y="3" width="3" height="1.2" fill="#555"/></svg>
<svg style="left:224px;top:320.6px" width="7.6" height="7.6" viewBox="0 0 7.6 7.6"><rect x="1.6" y="-0.2" width="4.4" height="8" rx="2.2" transform="rotate(45 3.8 3.8)" stroke="#b8b8b8" stroke-width="0.8" fill="#4a4a4a"/><path d="M2.4 5.2 L5.2 2.4" stroke="#b8b8b8" stroke-width="0.5"/></svg>
<svg style="left:239px;top:320.5px" width="8" height="7.6" viewBox="0 0 8 7.6"><rect x="0.5" y="0.5" width="7" height="6.6" rx="1" stroke="#b4b4b4" stroke-width="0.8" fill="none"/><path d="M2.2 2.2 L5.8 5.4" stroke="#b4b4b4" stroke-width="0.8"/></svg>
<div class="a" style="left:0px;top:333px;width:253px;height:7.5px;background:#262626;"></div>
<div class="a" style="left:0px;top:340.5px;width:253px;height:0.8px;background:#1c1c1c;"></div>
<svg style="left:4px;top:335.2px" width="5" height="3.4" viewBox="0 0 5 3.4"><ellipse cx="2.5" cy="1.7" rx="2.2" ry="1.4" stroke="#bbb" stroke-width="0.6" fill="none"/><circle cx="2.5" cy="1.7" r="0.7" fill="#bbb"/></svg>
<svg style="left:10px;top:334.5px" width="5" height="5" viewBox="0 0 5 5"><circle cx="2.5" cy="2.5" r="2.1" stroke="#bbb" stroke-width="0.6" fill="none"/><path d="M2.5 0.4 A2.1 2.1 0 0 1 2.5 4.6 Z" fill="#bbb"/></svg>
<svg style="left:17.5px;top:335.3px" width="3.5" height="3.5" viewBox="0 0 3.5 3.5"><circle cx="1.75" cy="1.75" r="1.6" fill="#bbb"/></svg>
<svg style="left:24px;top:334.4px" width="4.5" height="5" viewBox="0 0 4.5 5"><rect x="0.3" y="2.2" width="3.9" height="2.7" stroke="#bbb" stroke-width="0.6" fill="none"/><path d="M1.1 2.2 V1.3 A1.1 1.1 0 0 1 3.3 1.3 V2.2" stroke="#bbb" stroke-width="0.6" fill="none"/></svg>
<div class="a" style="left:31px;top:334px;width:0.6px;height:6px;background:#1c1c1c;"></div>
<div class="a" style="left:60px;top:334px;width:0.6px;height:6px;background:#1c1c1c;"></div>
<div class="a" style="left:119.5px;top:334px;width:0.6px;height:6px;background:#1c1c1c;"></div>
<div class="a" style="left:155px;top:334px;width:0.6px;height:6px;background:#1c1c1c;"></div>
<div class="a" style="left:162px;top:334px;width:0.6px;height:6px;background:#1c1c1c;"></div>
<div class="a" style="left:193px;top:334px;width:0.6px;height:6px;background:#1c1c1c;"></div>
<div class="a" style="left:246.5px;top:334px;width:0.6px;height:6px;background:#1c1c1c;"></div>
<svg style="left:38px;top:334.3px" width="5.5" height="5" viewBox="0 0 5.5 5"><path d="M0.5 0.5 H3 L5.2 2.7 L2.7 4.6 L0.5 2.6 Z" fill="#bdbdbd"/><circle cx="1.6" cy="1.5" r="0.5" fill="#262626"/></svg>
<div class="t" style="left:48px;top:336.00px;font-size:4.9px;line-height:4.9px;color:#8c8c8c;font-weight:400;transform:scaleX(1.000);text-shadow:0.2px 0 0 #8c8c8c;">#</div>
<div class="t" style="left:63px;top:336.00px;font-size:4.9px;line-height:4.9px;color:#8c8c8c;font-weight:400;transform:scaleX(0.836);text-shadow:0.2px 0 0 #8c8c8c;">Source Name</div>
<div class="t" style="left:122px;top:336.00px;font-size:4.9px;line-height:4.9px;color:#8c8c8c;font-weight:400;transform:scaleX(0.817);text-shadow:0.2px 0 0 #8c8c8c;">Mode</div>
<div class="t" style="left:156.3px;top:336.00px;font-size:4.9px;line-height:4.9px;color:#8c8c8c;font-weight:400;transform:scaleX(1.000);text-shadow:0.2px 0 0 #8c8c8c;">T</div>
<div class="t" style="left:163px;top:336.00px;font-size:4.9px;line-height:4.9px;color:#8c8c8c;font-weight:400;transform:scaleX(0.930);text-shadow:0.2px 0 0 #8c8c8c;">TrkMat</div>
<div class="t" style="left:196px;top:336.00px;font-size:4.9px;line-height:4.9px;color:#8c8c8c;font-weight:400;transform:scaleX(0.851);text-shadow:0.2px 0 0 #8c8c8c;">Parent &amp; Link</div>
<svg style="left:4px;top:344px" width="5" height="3.4" viewBox="0 0 5 3.4"><ellipse cx="2.5" cy="1.7" rx="2.2" ry="1.4" stroke="#c0c0c0" stroke-width="0.6" fill="none"/><circle cx="2.5" cy="1.7" r="0.7" fill="#c0c0c0"/></svg>
<div class="a" style="left:16px;top:341.5px;width:6px;height:8px;background:#1e1e1e;"></div>
<div class="a" style="left:24px;top:341.5px;width:6px;height:8px;background:#1e1e1e;"></div>
<svg style="left:34.5px;top:344px" width="3" height="3.6" viewBox="0 0 3 3.6"><path d="M0 0 L2.8 1.8 L0 3.6 Z" fill="#c8c8c8"/></svg>
<div class="a" style="left:39.5px;top:342.8px;width:5.8px;height:6px;background:#a8d8d0;"></div>
<div class="t" style="left:49.3px;top:343.00px;font-size:5.2px;line-height:5.2px;color:#b0b0b0;font-weight:400;transform:scaleX(1.000);text-shadow:0.2px 0 0 #b0b0b0;">1</div>
<svg style="left:61.8px;top:342.8px" width="5.6" height="5.4" viewBox="0 0 5.6 5.4"><path d="M2.8 0 L3.5 2 L5.6 2 L3.9 3.3 L4.6 5.4 L2.8 4.1 L1 5.4 L1.7 3.3 L0 2 L2.1 2 Z" fill="#d0d0d0"/></svg>
<div class="t" style="left:71px;top:343.00px;font-size:5.3px;line-height:5.3px;color:#c4c4c4;font-weight:400;transform:scaleX(0.964);text-shadow:0.2px 0 0 #c4c4c4;">Rectangle-example</div>
<div class="a" style="left:122px;top:342.3px;width:29.5px;height:7px;background:#1a1a1a;"></div>
<div class="t" style="left:123.5px;top:343.00px;font-size:5.0px;line-height:5.0px;color:#d0d0d0;font-weight:400;transform:scaleX(0.930);text-shadow:0.2px 0 0 #d0d0d0;">Normal</div>
<svg style="left:147px;top:345px" width="3.4" height="2" viewBox="0 0 3.4 2"><path d="M0.3 0.3 L1.7 1.6 L3.1 0.3" stroke="#a0a0a0" stroke-width="0.6" fill="none"/></svg>
<div class="a" style="left:155.5px;top:342.3px;width:5px;height:7px;background:#1a1a1a;"></div>
<svg style="left:196px;top:342.8px" width="5.5" height="5.5" viewBox="0 0 5.5 5.5"><circle cx="2.75" cy="2.75" r="2.3" stroke="#999" stroke-width="0.6" fill="none"/><circle cx="2.75" cy="2.75" r="1.1" stroke="#999" stroke-width="0.5" fill="none"/></svg>
<div class="a" style="left:205.5px;top:342.3px;width:38px;height:7px;background:#1a1a1a;"></div>
<div class="t" style="left:207.5px;top:343.00px;font-size:5.0px;line-height:5.0px;color:#d0d0d0;font-weight:400;transform:scaleX(1.004);text-shadow:0.2px 0 0 #d0d0d0;">None</div>
<svg style="left:239px;top:345px" width="3.4" height="2" viewBox="0 0 3.4 2"><path d="M0.3 0.3 L1.7 1.6 L3.1 0.3" stroke="#a0a0a0" stroke-width="0.6" fill="none"/></svg>
<div class="a" style="left:0px;top:350px;width:253px;height:0.6px;background:#1e1e1e;"></div>
<div class="a" style="left:253px;top:317px;width:495px;height:136px;background:#212121;"></div>
<div class="a" style="left:258px;top:350px;width:486px;height:103px;background:#323232;"></div>
<div class="a" style="left:744px;top:350px;width:4px;height:103px;background:#2a2a2a;"></div>
<div class="a" style="left:255px;top:319.4px;width:489.5px;height:3.6px;background:#6c6c6c;"></div>
<svg style="left:253.8px;top:319.4px" width="4" height="3.6" viewBox="0 0 4 3.6"><path d="M4 0 V3.6 H1.8 A1.8 1.8 0 0 1 1.8 0 Z" fill="#3a8fe0"/></svg>
<svg style="left:744.2px;top:319.4px" width="3.5" height="3.6" viewBox="0 0 3.5 3.6"><path d="M0 0 V3.6 H1.7 A1.8 1.8 0 0 0 1.7 0 Z" fill="#3a8fe0"/></svg>
<div class="a" style="left:256.75px;top:330px;width:0.6px;height:1.5px;background:#808080;"></div>
<div class="a" style="left:283.81px;top:330px;width:0.6px;height:1.5px;background:#808080;"></div>
<div class="a" style="left:310.87px;top:330px;width:0.6px;height:1.5px;background:#808080;"></div>
<div class="a" style="left:337.93px;top:330px;width:0.6px;height:1.5px;background:#808080;"></div>
<div class="a" style="left:364.99px;top:330px;width:0.6px;height:1.5px;background:#808080;"></div>
<div class="a" style="left:392.04999999999995px;top:330px;width:0.6px;height:1.5px;background:#808080;"></div>
<div class="a" style="left:419.11px;top:330px;width:0.6px;height:1.5px;background:#808080;"></div>
<div class="a" style="left:446.16999999999996px;top:330px;width:0.6px;height:1.5px;background:#808080;"></div>
<div class="a" style="left:473.23px;top:330px;width:0.6px;height:1.5px;background:#808080;"></div>
<div class="a" style="left:500.28999999999996px;top:330px;width:0.6px;height:1.5px;background:#808080;"></div>
<div class="a" style="left:527.3499999999999px;top:330px;width:0.6px;height:1.5px;background:#808080;"></div>
<div class="a" style="left:554.41px;top:330px;width:0.6px;height:1.5px;background:#808080;"></div>
<div class="a" style="left:581.47px;top:330px;width:0.6px;height:1.5px;background:#808080;"></div>
<div class="a" style="left:608.53px;top:330px;width:0.6px;height:1.5px;background:#808080;"></div>
<div class="a" style="left:635.5899999999999px;top:330px;width:0.6px;height:1.5px;background:#808080;"></div>
<div class="a" style="left:662.65px;top:330px;width:0.6px;height:1.5px;background:#808080;"></div>
<div class="a" style="left:689.71px;top:330px;width:0.6px;height:1.5px;background:#808080;"></div>
<div class="a" style="left:716.77px;top:330px;width:0.6px;height:1.5px;background:#808080;"></div>
<div class="a" style="left:743.8299999999999px;top:330px;width:0.6px;height:1.5px;background:#808080;"></div>
<div class="t" style="left:256.5px;top:326.00px;font-size:4.9px;line-height:4.9px;color:#9c9c9c;font-weight:400;transform:scaleX(0.969);text-shadow:0.2px 0 0 #9c9c9c;text-shadow:none">00f</div>
<div class="t" style="left:280.76px;top:326.00px;font-size:4.9px;line-height:4.9px;color:#9c9c9c;font-weight:400;transform:scaleX(0.969);text-shadow:0.2px 0 0 #9c9c9c;text-shadow:none">10f</div>
<div class="t" style="left:307.82px;top:326.00px;font-size:4.9px;line-height:4.9px;color:#9c9c9c;font-weight:400;transform:scaleX(0.969);text-shadow:0.2px 0 0 #9c9c9c;text-shadow:none">20f</div>
<div class="t" style="left:331.53px;top:326.00px;font-size:4.9px;line-height:4.9px;color:#9c9c9c;font-weight:400;transform:scaleX(0.977);text-shadow:0.2px 0 0 #9c9c9c;text-shadow:none">01:00f</div>
<div class="t" style="left:361.94px;top:326.00px;font-size:4.9px;line-height:4.9px;color:#9c9c9c;font-weight:400;transform:scaleX(0.969);text-shadow:0.2px 0 0 #9c9c9c;text-shadow:none">10f</div>
<div class="t" style="left:389.0px;top:326.00px;font-size:4.9px;line-height:4.9px;color:#9c9c9c;font-weight:400;transform:scaleX(0.969);text-shadow:0.2px 0 0 #9c9c9c;text-shadow:none">20f</div>
<div class="t" style="left:412.71px;top:326.00px;font-size:4.9px;line-height:4.9px;color:#9c9c9c;font-weight:400;transform:scaleX(0.977);text-shadow:0.2px 0 0 #9c9c9c;text-shadow:none">02:00f</div>
<div class="t" style="left:443.12px;top:326.00px;font-size:4.9px;line-height:4.9px;color:#9c9c9c;font-weight:400;transform:scaleX(0.969);text-shadow:0.2px 0 0 #9c9c9c;text-shadow:none">10f</div>
<div class="t" style="left:470.18px;top:326.00px;font-size:4.9px;line-height:4.9px;color:#9c9c9c;font-weight:400;transform:scaleX(0.969);text-shadow:0.2px 0 0 #9c9c9c;text-shadow:none">20f</div>
<div class="t" style="left:493.89px;top:326.00px;font-size:4.9px;line-height:4.9px;color:#9c9c9c;font-weight:400;transform:scaleX(0.977);text-shadow:0.2px 0 0 #9c9c9c;text-shadow:none">03:00f</div>
<div class="t" style="left:524.3px;top:326.00px;font-size:4.9px;line-height:4.9px;color:#9c9c9c;font-weight:400;transform:scaleX(0.969);text-shadow:0.2px 0 0 #9c9c9c;text-shadow:none">10f</div>
<div class="t" style="left:551.36px;top:326.00px;font-size:4.9px;line-height:4.9px;color:#9c9c9c;font-weight:400;transform:scaleX(0.969);text-shadow:0.2px 0 0 #9c9c9c;text-shadow:none">20f</div>
<div class="t" style="left:575.07px;top:326.00px;font-size:4.9px;line-height:4.9px;color:#9c9c9c;font-weight:400;transform:scaleX(0.977);text-shadow:0.2px 0 0 #9c9c9c;text-shadow:none">04:00f</div>
<div class="t" style="left:605.48px;top:326.00px;font-size:4.9px;line-height:4.9px;color:#9c9c9c;font-weight:400;transform:scaleX(0.969);text-shadow:0.2px 0 0 #9c9c9c;text-shadow:none">10f</div>
<div class="t" style="left:632.54px;top:326.00px;font-size:4.9px;line-height:4.9px;color:#9c9c9c;font-weight:400;transform:scaleX(0.969);text-shadow:0.2px 0 0 #9c9c9c;text-shadow:none">20f</div>
<div class="t" style="left:656.25px;top:326.00px;font-size:4.9px;line-height:4.9px;color:#9c9c9c;font-weight:400;transform:scaleX(0.977);text-shadow:0.2px 0 0 #9c9c9c;text-shadow:none">05:00f</div>
<div class="t" style="left:686.66px;top:326.00px;font-size:4.9px;line-height:4.9px;color:#9c9c9c;font-weight:400;transform:scaleX(0.969);text-shadow:0.2px 0 0 #9c9c9c;text-shadow:none">10f</div>
<div class="t" style="left:713.72px;top:326.00px;font-size:4.9px;line-height:4.9px;color:#9c9c9c;font-weight:400;transform:scaleX(0.969);text-shadow:0.2px 0 0 #9c9c9c;text-shadow:none">20f</div>
<div class="t" style="left:737.43px;top:326.00px;font-size:4.9px;line-height:4.9px;color:#9c9c9c;font-weight:400;transform:scaleX(0.977);text-shadow:0.2px 0 0 #9c9c9c;text-shadow:none">06:00f</div>
<div class="a" style="left:257px;top:332.3px;width:487.5px;height:6.6px;background:#6e6e6e;"></div>
<svg style="left:254.4px;top:332.4px" width="3" height="6.6" viewBox="0 0 3 6.6"><rect x="0" y="0" width="3" height="6.6" rx="1.5" fill="#3a8fe0"/></svg>
<svg style="left:744.2px;top:332.2px" width="2.7" height="6.8" viewBox="0 0 2.7 6.8"><rect x="0" y="0" width="2.7" height="6.8" rx="1.35" fill="#3a8fe0"/></svg>
<div class="a" style="left:253px;top:338.9px;width:495px;height:0.6px;background:#2a2a2a;"></div>
<div class="a" style="left:257px;top:339.5px;width:487px;height:1.6px;background:#19a419;"></div>
<div class="a" style="left:257px;top:341.6px;width:487px;height:6.6px;background:#7c8c88;"></div>
<div class="a" style="left:253px;top:348.2px;width:495px;height:2px;background:#232323;"></div>
<div class="a" style="left:256.8px;top:331px;width:0.9px;height:122px;background:#3478c0;"></div>
<svg style="left:254px;top:325.2px" width="6.2" height="6.6" viewBox="0 0 6.2 6.6"><path d="M0 0.8 Q0 0 0.8 0 H5.4 Q6.2 0 6.2 0.8 V3.2 L3.1 6.6 L0 3.2 Z" fill="#3a8fe0"/><path d="M1.4 2 H4.8 L3.1 4.2 Z" fill="none" stroke="#2466a8" stroke-width="0.6"/></svg>
<div class="a" style="left:748px;top:317px;width:8px;height:145px;background:#272727;"></div>
<svg style="left:749.2px;top:333px" width="5.5" height="6.5" viewBox="0 0 5.5 6.5"><path d="M0.3 0.3 H5.2 V3.8 L2.75 6.2 L0.3 3.8 Z" fill="#c8c8c8"/></svg>
<svg style="left:748.5px;top:342px" width="7" height="6.5" viewBox="0 0 7 6.5"><path d="M0.5 3.3 L3.2 0.6 L6.4 3.3 L3.2 6.2 Z" stroke="#b8b8b8" stroke-width="0.7" fill="#3a3a3a"/><path d="M3.2 0.6 L6.4 3.3 L4.6 5 Z" fill="#d0d0d0"/><circle cx="2.6" cy="3.8" r="0.8" fill="#111"/></svg>
<div class="a" style="left:0px;top:453px;width:745px;height:9px;background:#1d1d1d;"></div>
<div class="a" style="left:0px;top:452.6px;width:745px;height:0.6px;background:#151515;"></div>
<svg style="left:4px;top:456px" width="5.5" height="5" viewBox="0 0 5.5 5"><rect x="0.3" y="0.3" width="3.6" height="3.6" stroke="#aaa" stroke-width="0.6" fill="none"/><rect x="1.6" y="1.4" width="3.6" height="3.3" fill="#aaa"/></svg>
<svg style="left:12.5px;top:456px" width="5.5" height="5" viewBox="0 0 5.5 5"><circle cx="2" cy="2" r="1.7" stroke="#3a8fe0" stroke-width="0.7" fill="none"/><circle cx="3.4" cy="3" r="1.7" stroke="#3a8fe0" stroke-width="0.7" fill="#3a8fe0" fill-opacity="0.4"/></svg>
<svg style="left:20.5px;top:455.7px" width="5.5" height="5.5" viewBox="0 0 5.5 5.5"><circle cx="2.75" cy="2.75" r="2.3" stroke="#aaa" stroke-width="0.6" fill="none"/><path d="M2.75 0.5 V5 M0.5 2.75 H5" stroke="#aaa" stroke-width="0.5"/></svg>
<div class="a" style="left:121px;top:453.5px;width:72px;height:8.5px;background:#171717;"></div>
<div class="t" style="left:130px;top:455.00px;font-size:5.3px;line-height:5.3px;color:#a8a8a8;font-weight:400;transform:scaleX(0.922);text-shadow:0.2px 0 0 #a8a8a8;text-shadow:0.15px 0 0 #a8a8a8">Toggle Switches / Modes</div>
<svg style="left:256px;top:457px" width="4.5" height="2.2" viewBox="0 0 4.5 2.2"><path d="M0 2 L2.2 0 L4.5 2 Z" fill="#aaa"/></svg>
<div class="a" style="left:268px;top:457.5px;width:19px;height:0.7px;background:#444;"></div>
<svg style="left:265.5px;top:455.5px" width="5" height="5" viewBox="0 0 5 5"><circle cx="2.5" cy="2.5" r="1.9" stroke="#b0b0b0" stroke-width="0.8" fill="#1d1d1d"/></svg>
<svg style="left:292.5px;top:456px" width="7.5" height="3.5" viewBox="0 0 7.5 3.5"><path d="M0 3.3 L2 1 L3 2 L4.5 0.3 L7.5 3.3 Z" fill="#d0d0d0"/></svg>
</body></html>
